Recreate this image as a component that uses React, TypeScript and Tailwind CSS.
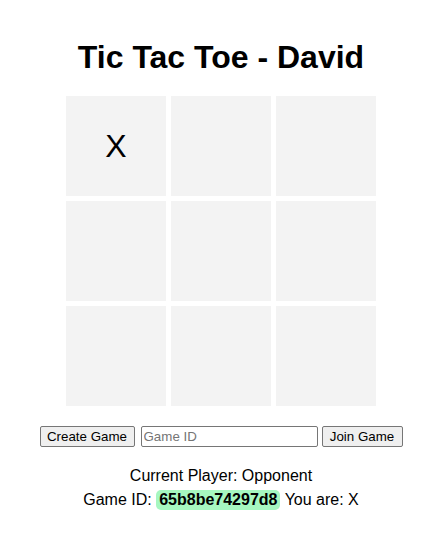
import React from 'react'

const board = ['X', '', '', '', '', '', '', '', '']

export default function App() {
  return (
    <div className="min-h-screen bg-white pr-px flex flex-col items-center text-black font-['Liberation_Sans',Arial,sans-serif]">
      <h1 className="pt-[39px] text-[32px] leading-[37px] font-bold">Tic Tac Toe - David</h1>

      <div className="mt-[20px] grid grid-cols-[100px_100px_100px] gap-[5px]">
        {board.map((cell, i) => (
          <div key={i} className="w-[100px] h-[100px] bg-[#f3f3f3] flex items-center justify-center text-[32px]">
            {cell}
          </div>
        ))}
      </div>

      <div className="mt-[20px] flex items-center text-[13.33px]">
        <button className="w-[95px] h-[21px] bg-[#efefef] border border-[#767676] rounded-[2px] leading-none">
          Create Game
        </button>
        <input
          placeholder="Game ID"
          className="ml-[6px] w-[177px] h-[21px] px-[2px] border border-[#767676] rounded-[2px] placeholder:text-[#757575] outline-none"
        />
        <button className="ml-[4px] w-[81px] h-[21px] bg-[#efefef] border border-[#767676] rounded-[2px] leading-none">
          Join Game
        </button>
      </div>

      <div className="mt-[20px] text-[16px] leading-[18px]">Current Player: Opponent</div>
      <div className="mt-[5px] text-[16px] leading-[18px]">
        Game ID:{' '}
        <span className="inline-block bg-[#a6f7c0] rounded-[5px] px-[3px] py-[1px] font-bold">65b8be74297d8</span>{' '}
        You are: X
      </div>
    </div>
  )
}
